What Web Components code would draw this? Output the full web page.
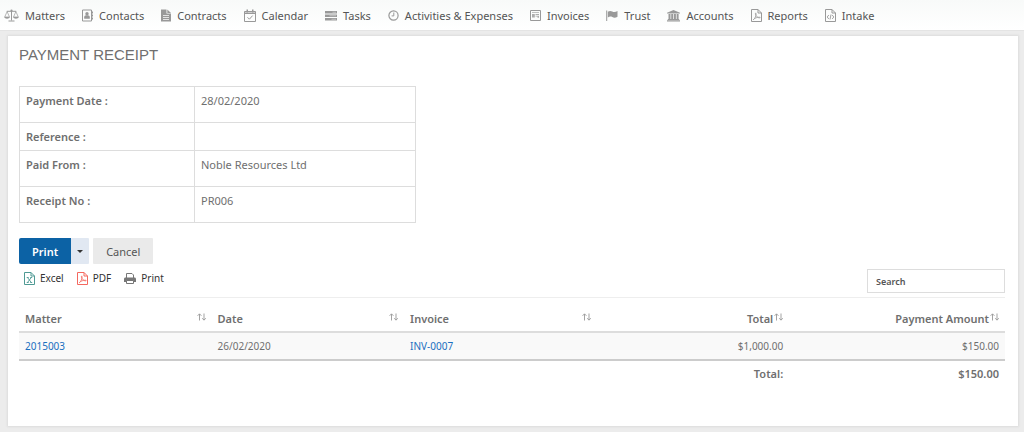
<!DOCTYPE html>
<html lang="en">
<head>
<meta charset="utf-8">
<meta name="viewport" content="width=device-width, initial-scale=1">
<title>Payment Receipt</title>
<style>
  body {
    margin: 0;
    min-height: 100vh;
    background: #ececec;
    color: #6f6f6f;
    font-family: "Noto Sans", "Open Sans", sans-serif;
    font-size: 11px;
    line-height: 15px;
  }
  h1 {
    margin: 0 0 22px;
    font: 15px/18px "Liberation Sans", Arial, sans-serif;
    text-transform: uppercase;
  }
</style>
</head>
<body>
  <main-menu>
    <menu-link icon="scales">Matters</menu-link>
    <menu-link icon="contact">Contacts</menu-link>
    <menu-link icon="contract">Contracts</menu-link>
    <menu-link icon="calendar">Calendar</menu-link>
    <menu-link icon="tasks">Tasks</menu-link>
    <menu-link icon="clock">Activities &amp; Expenses</menu-link>
    <menu-link icon="invoice">Invoices</menu-link>
    <menu-link icon="flag">Trust</menu-link>
    <menu-link icon="bank">Accounts</menu-link>
    <menu-link icon="pdf">Reports</menu-link>
    <menu-link icon="code">Intake</menu-link>
  </main-menu>
  <page-card>
    <h1>Payment Receipt</h1>
    <receipt-details></receipt-details>
    <form-actions></form-actions>
    <table-tools></table-tools>
    <payment-table></payment-table>
  </page-card>

<script>
const ICONS = {
  scales: [15, 13, `
    <path d="M7.5 1v10.5M4.5 12h6M2.8 2.3h9.4" fill="none" stroke="currentColor"/>
    <circle cx="7.5" cy="1.6" r="1.1"/>
    <path d="M3.1 2.6L.7 8h4.8zM11.9 2.6L9.5 8h4.8z" fill="none" stroke="currentColor" stroke-width=".7"/>
    <path d="M.3 8h5.5c-.3 2.2-5.2 2.2-5.5 0zM9.2 8h5.5c-.3 2.2-5.2 2.2-5.5 0z"/>`],
  contact: [11, 13, `
    <path d="M.5 1h9v11h-9zM10.5 2.5v2M10.5 5.5v2M10.5 8.5v2" fill="none" stroke="currentColor"/>
    <circle cx="5" cy="4.8" r="1.7"/>
    <path d="M2.2 9.8V8.200c0-1.200.9-1.900 1.800-1.900h2c.9 0 1.800.7 1.800 1.900v1.600z"/>`],
  contract: [10, 13, `
    <path fill-rule="evenodd" d="M0 .5h5.500v4H10v8H0zM2 6v.8h6V6zm0 2v.8h6V8zm0 2v.8h6V10z"/>
    <path d="M6.300.5L10 3.900H6.300z"/>`],
  calendar: [12, 13, `
    <path d="M.5 2.500h11v10H.5zM.5 4.500h11" fill="none" stroke="currentColor"/>
    <path d="M.5 2.500h11v2H.5z" opacity=".45"/>
    <path d="M2.500.5h1.500v3H2.500zM8 .5h1.500v3H8z"/>
    <path d="M3.500 8.300l1.900 1.900 3.200-3.600" fill="none" stroke="currentColor"/>`],
  tasks: [12, 13, `
    <path d="M0 2h12v2.500H0zM0 5.500h12V8H0zM0 9h12v2.500H0z"/>
    <path d="M7.500 2.800H11v.9H7.500zM4.500 6.300H11v.9H4.500zM6.500 9.800H11v.9H6.500z" fill="#fff" opacity=".4"/>`],
  clock: [11, 13, `
    <circle cx="5.500" cy="6.500" r="4.600" fill="none" stroke="currentColor" stroke-width="1.200"/>
    <path d="M5.800 3.500v3.400H3.600" fill="none" stroke="currentColor"/>`],
  invoice: [11, 13, `
    <path d="M.5 1.500h10v10H.5z" fill="none" stroke="currentColor"/>
    <path d="M2 3h7v.8H2zM2 5h2.800v3.500H2zM5.500 5H9v.9H5.500zM5.500 6.700H9v.9H5.500zM7.500 7.600H9v1.200H7.500z" opacity=".8"/>`],
  flag: [12, 13, `
    <path d="M.2 1.600h1V12h-1z"/>
    <path d="M1.800 2.700c1.500-.9 3-1 4.500-.2 1.600.9 3.200.6 5.200-.4v5.700c-1.900 1.100-3.600 1.200-5.200.3-1.500-.8-3-.6-4.500.3z"/>`],
  bank: [13, 13, `
    <path d="M6.500 1L13 3.700v.9H0v-.9zM1.500 5h2v5h-2zM4.200 5h2v5h-2zM6.900 5h2v5h-2zM9.600 5h2v5h-2zM.8 10h11.400v.9H.8zM0 11.200h13v1.200H0z"/>`],
  pdf: [11, 13, `
    <path d="M.5.500H7L10.500 4v8.500H.5zM7 .5V4h3.500" fill="none" stroke="currentColor"/>
    <path d="M2.300 10.700C4 9.500 5.200 6.800 5 4.500c0-.9-.8-.7-.5.4.5 2.300 2 4 4.300 4 .8 0 .6-.9-.7-.7-2.200.1-4.300.9-5.800 2.500z" fill="none" stroke="currentColor" stroke-width=".8"/>`],
  code: [11, 13, `
    <path d="M.5.500H7L10.500 4v8.500H.5zM7 .5V4h3.500" fill="none" stroke="currentColor"/>
    <path d="M3.800 6L2.200 8l1.600 2M7.200 6l1.600 2-1.600 2M6 5.500L5 10.500" fill="none" stroke="currentColor" stroke-width=".9"/>`],
  excel: [11, 13, `
    <path d="M.5.500H7L10.500 4v8.500H.5zM7 .5V4h3.500" fill="none" stroke="currentColor"/>
    <path d="M3.500 5.500l3.800 5M7.300 5.500l-3.800 5M2.700 5.500h2M6.200 5.500h2M2.700 10.500h2M6.200 10.500h2" fill="none" stroke="currentColor" stroke-width=".9"/>`],
  printer: [12, 13, `
    <path d="M2.500 6V1.500h5.500l1.500 1.500v3M2.500 8.500h7v3h-7z" fill="none" stroke="currentColor"/>
    <path d="M1.500 5.500h9c.9 0 1.500.6 1.500 1.500v3H9.500V8.500h-7V10H0V7c0-.9.6-1.500 1.500-1.500z"/>`],
  sort: [9, 8, `
    <path d="M2.500 7.500V1M.6 2.800L2.500.8l1.900 2M7 .5V7M5.200 5.200L7 7.200l1.800-2" fill="none" stroke="currentColor" stroke-width=".9"/>`]
};

class UiIcon extends HTMLElement {
  constructor() {
    super();
    this.attachShadow({ mode: "open" });
  }

  connectedCallback() {
    const [width, height, shape] = ICONS[this.getAttribute("name")];
    this.shadowRoot.innerHTML = `
      <style>
        :host { display: inline-flex; flex: none; }
        svg { display: block; fill: currentColor; }
      </style>
      <svg width="${width}" height="${height}" viewBox="0 0 ${width} ${height}" aria-hidden="true">${shape}</svg>
    `;
  }
}

class MainMenu extends HTMLElement {
  constructor() {
    super();
    this.attachShadow({ mode: "open" }).innerHTML = `
      <style>
        :host {
          display: block;
          background: linear-gradient(#f8faf9, #fff);
          border-bottom: 1px solid #e4e4e4;
        }
        nav {
          display: flex;
          gap: 17px;
          padding: 8px 4px 7px;
        }
      </style>
      <nav aria-label="Main"><slot></slot></nav>
    `;
  }
}

class MenuLink extends HTMLElement {
  constructor() {
    super();
    this.attachShadow({ mode: "open" });
  }

  connectedCallback() {
    this.shadowRoot.innerHTML = `
      <style>
        :host { display: block; white-space: nowrap; }
        a {
          display: flex;
          align-items: center;
          gap: 6px;
          color: #555;
          text-decoration: none;
        }
        a:hover { color: #0c62a5; }
        ui-icon { color: #999; }
      </style>
      <a href="#"><ui-icon name="${this.getAttribute("icon")}"></ui-icon><slot></slot></a>
    `;
  }
}

class PageCard extends HTMLElement {
  constructor() {
    super();
    this.attachShadow({ mode: "open" }).innerHTML = `
      <style>
        :host {
          display: block;
          margin: 5px 6px 4px 8px;
          padding: 10px 13px 40px 11px;
          background: #fff;
          box-shadow: 0 0 2px 1px #dcdcdc;
        }
      </style>
      <main><slot></slot></main>
    `;
  }
}

class ReceiptDetails extends HTMLElement {
  constructor() {
    super();
    this.attachShadow({ mode: "open" });
  }

  connectedCallback() {
    const rows = [
      ["Payment Date :", "28/02/2020"],
      ["Reference :", ""],
      ["Paid From :", "Noble Resources Ltd"],
      ["Receipt No :", "PR006"]
    ];
    this.shadowRoot.innerHTML = `
      <style>
        :host { display: block; }
        table {
          width: 397px;
          max-width: 100%;
          border-collapse: collapse;
        }
        th, td {
          padding: 6px;
          border: 1px solid #ddd;
          text-align: left;
          vertical-align: top;
        }
        th { width: 162px; font-weight: 600; }
        p { margin: 0 0 8px; }
      </style>
      <table>
        ${rows.map(([label, value]) => `
          <tr><th scope="row">${label}</th><td>${value ? `<p>${value}</p>` : ""}</td></tr>
        `).join("")}
      </table>
    `;
  }
}

class FormActions extends HTMLElement {
  constructor() {
    super();
    this.attachShadow({ mode: "open" }).innerHTML = `
      <style>
        :host { display: flex; gap: 4px; margin-top: 15px; }
        .split { display: flex; }
        button {
          height: 26px;
          padding: 0 13px;
          border: 0;
          border-radius: 1px;
          background: #eaeaea;
          color: #555;
          font: inherit;
          cursor: pointer;
        }
        .print {
          background: #0c62a5;
          color: #fff;
          font-weight: 600;
          border-radius: 2px 0 0 2px;
        }
        .toggle { padding: 0 6px; background: #e1e8f2; }
        .toggle::before {
          content: "";
          display: block;
          border: 3px solid transparent;
          border-top-color: #333;
          border-bottom: 0;
        }
      </style>
      <div class="split">
        <button class="print" type="button">Print</button>
        <button class="toggle" type="button" aria-label="More print options"></button>
      </div>
      <button type="button">Cancel</button>
    `;
  }
}

class TableTools extends HTMLElement {
  constructor() {
    super();
    this.attachShadow({ mode: "open" }).innerHTML = `
      <style>
        :host {
          display: flex;
          justify-content: space-between;
          align-items: flex-start;
          padding: 5px 0 4px;
          border-bottom: 1px solid #eee;
          font-size: 10px;
        }
        .exports { display: flex; gap: 13px; padding: 2px 5px; }
        button {
          display: flex;
          align-items: center;
          gap: 5px;
          padding: 0;
          border: 0;
          background: none;
          color: #333;
          font: inherit;
          cursor: pointer;
        }
        .excel { color: #4f9a94; }
        .pdf { color: #f4685f; }
        .printer { color: #777; }
        input {
          box-sizing: border-box;
          width: 138px;
          height: 24px;
          padding: 0 8px;
          border: 1px solid #ddd;
          background: #fff;
          color: #555;
          font: 600 9px "Noto Sans", "Open Sans", sans-serif;
        }
        input::placeholder { color: #555; opacity: 1; }
      </style>
      <div class="exports">
        <button type="button"><ui-icon class="excel" name="excel"></ui-icon>Excel</button>
        <button type="button"><ui-icon class="pdf" name="pdf"></ui-icon>PDF</button>
        <button type="button"><ui-icon class="printer" name="printer"></ui-icon>Print</button>
      </div>
      <input type="search" placeholder="Search" aria-label="Search">
    `;
  }
}

class PaymentTable extends HTMLElement {
  constructor() {
    super();
    this.attachShadow({ mode: "open" });
  }

  connectedCallback() {
    const columns = ["Matter", "Date", "Invoice", "Total", "Payment Amount"];
    this.shadowRoot.innerHTML = `
      <style>
        :host { display: block; }
        table {
          width: 100%;
          table-layout: fixed;
          border-collapse: separate;
          border-spacing: 0;
        }
        th, td { padding: 5px 6px; text-align: left; font-weight: 400; }
        thead th {
          width: 19.5%;
          padding: 13px 6px 5px;
          border-bottom: 2px solid #ddd;
        }
        thead th:last-child { width: 22%; }
        button {
          display: flex;
          justify-content: space-between;
          width: 100%;
          padding: 0;
          border: 0;
          background: none;
          color: inherit;
          font: inherit;
          font-weight: 600;
          cursor: pointer;
        }
        ui-icon { padding-top: 2px; color: #999; }
        .amount { text-align: right; }
        .amount button { justify-content: flex-end; gap: 1px; }
        tbody td {
          padding-top: 6px;
          background: #f9f9f9;
          border-bottom: 2px solid #ccc;
          font-size: 10px;
        }
        tfoot td { font-weight: 600; }
        a { color: #1a6fbf; text-decoration: none; }
        a:hover { text-decoration: underline; }
      </style>
      <table>
        <thead>
          <tr>
            ${columns.map((name, i) => `
              <th scope="col" class="${i > 2 ? "amount" : ""}">
                <button type="button">${name}<ui-icon name="sort"></ui-icon></button>
              </th>
            `).join("")}
          </tr>
        </thead>
        <tbody>
          <tr>
            <td><a href="#">2015003</a></td>
            <td>26/02/2020</td>
            <td><a href="#">INV-0007</a></td>
            <td class="amount">$1,000.00</td>
            <td class="amount">$150.00</td>
          </tr>
        </tbody>
        <tfoot>
          <tr>
            <td colspan="3"></td>
            <td class="amount">Total:</td>
            <td class="amount">$150.00</td>
          </tr>
        </tfoot>
      </table>
    `;
  }
}

customElements.define("ui-icon", UiIcon);
customElements.define("main-menu", MainMenu);
customElements.define("menu-link", MenuLink);
customElements.define("page-card", PageCard);
customElements.define("receipt-details", ReceiptDetails);
customElements.define("form-actions", FormActions);
customElements.define("table-tools", TableTools);
customElements.define("payment-table", PaymentTable);
</script>
</body>
</html>
